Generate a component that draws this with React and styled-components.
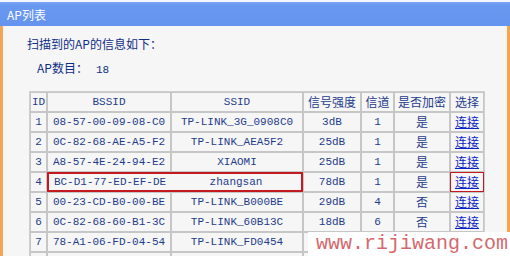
import React from 'react'
import styled, { createGlobalStyle } from 'styled-components'

const GlobalStyle = createGlobalStyle`
  html, body {
    margin: 0;
    padding: 0;
    background: #ffffff;
  }
`

const Frame = styled.div`
  height: 256px;
  overflow: hidden;
  position: relative;
  width: 510px;
`

const TitleBar = styled.div`
  align-items: center;
  background: linear-gradient(#7aa6f4 0, #6898ef 3px, #6494ee 100%);
  border-top: 2px solid #f2f6ff;
  box-sizing: border-box;
  color: #ffffff;
  display: flex;
  font-family: 'Noto Sans CJK SC', 'Liberation Sans', sans-serif;
  font-size: 12px;
  height: 26px;
  padding-left: 7px;
`

const Panel = styled.div`
  background-color: #f6f6f6;
  border-left: 3px solid #f2a552;
  border-right: 3px solid #f2a552;
  box-sizing: border-box;
  height: 230px;
  padding-top: 10px;
  width: 510px;
`

const Line = styled.div`
  color: #112e86;
  font-family: 'Noto Sans CJK SC', 'Liberation Sans', sans-serif;
  font-size: 12px;
  height: 16px;
  line-height: 16px;
  margin-bottom: 8px;
  padding-left: ${(p) => p.$indent}px;
`

const Count = styled.span`
  font-family: 'Liberation Mono', monospace;
  font-size: 11px;
  margin-left: 8px;
`

const TableWrap = styled.div`
  padding-left: 26px;
  padding-top: 7px;
`

const Table = styled.table`
  border-collapse: separate;
  border-spacing: 0;
  border: 1px solid #cfcfcf;
  color: #1f3c8c;
  table-layout: fixed;
  width: 454px;
`

const red = '#c41a1f'

const Cell = styled.td`
  border: 1px solid #c6c6c6;
  box-sizing: border-box;
  font-family: ${(p) =>
    p.$cjk
      ? "'Noto Sans CJK SC', 'Liberation Sans', sans-serif"
      : "'Liberation Mono', 'Noto Sans CJK SC', monospace"};
  font-size: ${(p) => (p.$cjk ? '12px' : '11px')};
  height: 20px;
  line-height: 16px;
  overflow: hidden;
  padding: 0;
  text-align: center;
  white-space: nowrap;

  ${(p) =>
    p.$mark === 'left' &&
    `border-color: ${red}; border-width: 2px 0 2px 2px;`}
  ${(p) =>
    p.$mark === 'right' &&
    `border-color: ${red}; border-width: 2px 2px 2px 0;`}
  ${(p) => p.$mark === 'box' && `border-color: ${red};`}
`

const Link = styled.a`
  color: #0a22c8;
  text-decoration: underline;
`

const Watermark = styled.div`
  background: #ffffff;
  bottom: 0;
  color: #d46a6e;
  font-family: 'Liberation Mono', monospace;
  font-size: 20px;
  height: 24px;
  left: 308px;
  line-height: 24px;
  padding-left: 8px;
  position: absolute;
  right: 0;
  white-space: nowrap;
`

const cols = [17, 124, 132, 58, 33, 56, 34]
const heads = ['ID', 'BSSID', 'SSID', '信号强度', '信道', '是否加密', '选择']

const rows = [
  ['1', '08-57-00-09-08-C0', 'TP-LINK_3G_0908C0', '3dB', '1', '是'],
  ['2', '0C-82-68-AE-A5-F2', 'TP-LINK_AEA5F2', '25dB', '1', '是'],
  ['3', 'A8-57-4E-24-94-E2', 'XIAOMI', '25dB', '1', '是'],
  ['4', 'BC-D1-77-ED-EF-DE', 'zhangsan', '78dB', '1', '是', true],
  ['5', '00-23-CD-B0-00-BE', 'TP-LINK_B000BE', '29dB', '4', '否'],
  ['6', '0C-82-68-60-B1-3C', 'TP-LINK_60B13C', '18dB', '6', '否'],
  ['7', '78-A1-06-FD-04-54', 'TP-LINK_FD0454', '', '', ''],
  ['8', '', '', '', '', ''],
]

export default function App() {
  return (
    <Frame>
      <GlobalStyle />
      <TitleBar>AP列表</TitleBar>
      <Panel>
        <Line $indent={24}>扫描到的AP的信息如下：</Line>
        <Line $indent={34}>
          AP数目：<Count>18</Count>
        </Line>
        <TableWrap>
          <Table>
            <colgroup>
              {cols.map((w, i) => (
                <col key={i} style={{ width: w }} />
              ))}
            </colgroup>
            <tbody>
              <tr>
                {heads.map((h, i) => (
                  <Cell key={h} $cjk={i > 2}>
                    {h}
                  </Cell>
                ))}
              </tr>
              {rows.map(([id, bssid, ssid, sig, ch, enc, hl]) => (
                <tr key={id}>
                  <Cell>{id}</Cell>
                  <Cell $mark={hl ? 'left' : undefined}>{bssid}</Cell>
                  <Cell $mark={hl ? 'right' : undefined}>{ssid}</Cell>
                  <Cell>{sig}</Cell>
                  <Cell>{ch}</Cell>
                  <Cell $cjk>{enc}</Cell>
                  <Cell $cjk $mark={hl ? 'box' : undefined}>
                    {bssid && sig ? <Link href="#">连接</Link> : ''}
                  </Cell>
                </tr>
              ))}
            </tbody>
          </Table>
        </TableWrap>
      </Panel>
      <Watermark>www.rijiwang.com</Watermark>
    </Frame>
  )
}
